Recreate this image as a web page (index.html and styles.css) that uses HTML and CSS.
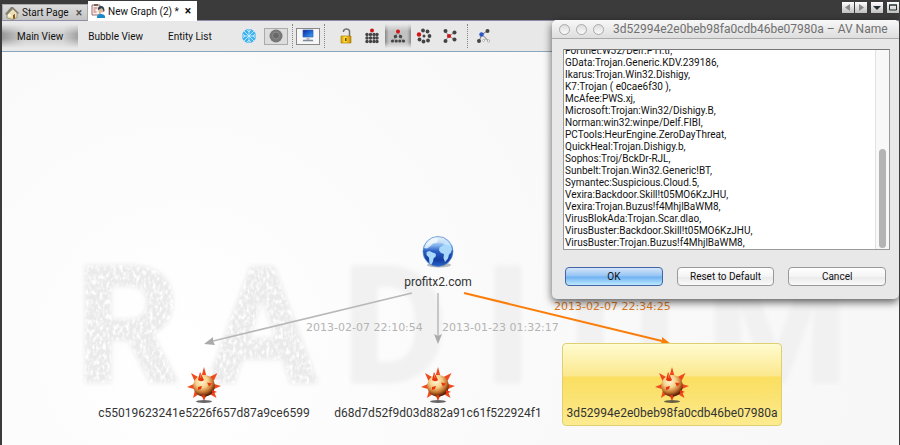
FILE: index.html
```html
<!DOCTYPE html>
<html lang="en">
<head>
<meta charset="utf-8">
<title>New Graph (2)</title>
<link rel="stylesheet" href="styles.css">
</head>
<body>
<svg class="defs" width="0" height="0" aria-hidden="true">
  <defs>
    <radialGradient id="ball" cx=".4" cy=".3" r=".72">
      <stop offset="0" stop-color="#fff8d4"/><stop offset=".4" stop-color="#f6d08a"/><stop offset=".7" stop-color="#c8742e"/><stop offset="1" stop-color="#401000"/>
    </radialGradient>
    <linearGradient id="sea" x2="0" y2="1">
      <stop offset="0" stop-color="#e2f2fd"/><stop offset=".3" stop-color="#82b2ea"/><stop offset=".48" stop-color="#2b5fc6"/><stop offset=".78" stop-color="#143da0"/><stop offset="1" stop-color="#2a66c6"/>
    </linearGradient>
    <linearGradient id="gold" x2="1"><stop stop-color="#d89b00"/><stop offset=".4" stop-color="#ffe33a"/><stop offset="1" stop-color="#c98800"/></linearGradient>
    <linearGradient id="screen" x2="1" y2="1"><stop stop-color="#06259e"/><stop offset="1" stop-color="#3aa3ff"/></linearGradient>
    <symbol id="mine" viewBox="0 0 36 38">
      <ellipse cx="18" cy="35.500" rx="8" ry="1.400" fill="#333" opacity=".75"/>
      <g fill="#f04a1c">
        <path d="M15.800 9 18 1l2.200 8zM23.500 11l8-4-4 8zM28 18l7 2-7 3zM27.500 24l3 8-7-4zM20.500 29l-2.500 6-2.500-6zM13 28l-6 4 2-8zM8 23l-7-2 7-3zM8.500 15 5 7l7 4z"/>
      </g>
      <circle cx="18" cy="19.800" r="10.800" fill="url(#ball)"/>
      <g fill="#e8330b">
        <path d="M12 14 14 6l4 8q-2 2.500-6 0zM21 16.500l5 1-3 3zM12 21l4-1-1 3-3 1z"/>
        <path d="M26 24l5 2-5 1.500zM19 29l-1 5-2-5z"/>
      </g>
      <path d="M14 8l1 4" stroke="#ff8a5c" stroke-width=".8"/>
    </symbol>
    <symbol id="globe" viewBox="0 0 34 34">
      <ellipse cx="18" cy="30" rx="12" ry="2.500" fill="#777" opacity=".5"/>
      <circle cx="17" cy="16.500" r="15" fill="url(#sea)" stroke="#4a80c8" stroke-width=".7"/>
      <path d="M3 13Q6 4 14 2.500l3 2-1 3-4 1-3 3-3 2z" fill="#eef8fe" opacity=".8"/>
      <path d="M5.500 17l3-1 3 1.500 3 1 .5 2.500-2.500 2.500-.5 3-1.500 3-2-1-.5-6-2.500-2.500z" fill="#a9d8fb"/>
      <path d="M18.500 12.500l4-2.500 0-3 3-2 3.500 3 2 6-1 3.500-2 2-1 4-3 3.500-1.500-4 .5-4-3-1-2-2.500z" fill="#a9d8fb"/>
      <path d="M4.500 11Q17 5 29.500 11 26 2.500 17 2.500T4.500 11z" fill="#fff" opacity=".35"/>
    </symbol>
    <filter id="soft" x="-10%" y="-10%" width="120%" height="120%"><feGaussianBlur stdDeviation="2"/></filter>
    <filter id="leather" x="-10%" y="-10%" width="120%" height="120%">
      <feTurbulence type="fractalNoise" baseFrequency=".3 .2" numOctaves="2" seed="4" result="n"/>
      <feColorMatrix in="n" values="0 0 0 0 1  0 0 0 0 1  0 0 0 0 1  3 0 0 0 -1.300" result="spots"/>
      <feComposite in="spots" in2="SourceAlpha" operator="in" result="inside"/>
      <feGaussianBlur in="SourceGraphic" stdDeviation="2" result="base"/>
      <feMerge><feMergeNode in="base"/><feMergeNode in="inside"/></feMerge>
    </filter>
  </defs>
</svg>

<header class="tabbar">
  <nav class="tabs" aria-label="Documents">
    <div class="tab">
      <svg width="14" height="14" viewBox="0 0 14 14"><path d="M2 7v5l6 1.500 4-2V7L7 2z" fill="#ece0b8" stroke="#8a7c54" stroke-width=".7"/><path d="M0 8 6 1l2 0 6 6-1 1-5-5-6 6z" fill="#85806f"/><path d="M8 13V9l2-1v4.500z" fill="#895d22"/><path d="M3 8.500h3v2H3z" fill="#fffbe6"/></svg>
      <a href="#start">Start Page</a><button class="close" aria-label="Close Start Page">×</button>
    </div>
    <div class="tab active">
      <svg width="14" height="14" viewBox="0 0 14 14"><path d="M1 1h8v10H1z" fill="#f7eeee" stroke="#9b6e69"/><path d="M3 0h4v2H3z" fill="#77645f"/><path d="M2.500 4h4M2.500 6h2M2.500 8h3" stroke="#bd6a64"/><path d="M6 14q-.5-4 4-4t4 4z" fill="#198bc7"/><circle cx="10" cy="6" r="2.800" fill="#dcb99c"/><path d="M7 6q-.5-4 3-4t3.500 5l-1 1q0-3-2-4-1 1-3.500 2z" fill="#32434d"/></svg>
      <a href="#graph">New Graph (2) *</a><button class="close" aria-label="Close New Graph">×</button>
    </div>
  </nav>
  <div class="window-tools">
    <button aria-label="Previous tab"><svg width="12" height="11"><path d="M8 2v7L3 5.500z" fill="#888"/></svg></button>
    <button aria-label="Next tab"><svg width="12" height="11"><path d="M4 2v7l5-3.500z" fill="#888"/></svg></button>
    <button class="apart" aria-label="List tabs"><svg width="12" height="11"><path d="M2 4h8L6 8z" fill="#223033"/></svg></button>
    <button class="apart" aria-label="Maximize"><svg width="12" height="11"><path d="M2.500 3h7v5h-7z" fill="none" stroke="#223033"/><path d="M2 2.500h8v1H2z" fill="#223033"/></svg></button>
  </div>
</header>

<div class="toolbar">
  <button class="view pressed">Main View</button>
  <button class="view">Bubble View</button>
  <button class="view">Entity List</button>
  <div class="tools">
    <button class="tool" aria-label="Freeze"><svg width="16" height="16" viewBox="0 0 16 16"><circle cx="8" cy="8" r="7" fill="#3eb1ef"/><path d="M8 1v14M1 8h14M3 3l10 10M13 3 3 13M6 2l2 2 2-2M6 14l2-2 2 2M2 6l2 2-2 2M14 6l-2 2 2 2" fill="none" stroke="#d3f2ff" stroke-width=".8"/></svg></button>
    <button class="tool boxed" aria-label="Record"><svg width="14" height="14" viewBox="0 0 14 14"><circle cx="7" cy="7" r="6.500" fill="#767676"/><circle cx="7" cy="6.500" r="3.500" fill="#686868" stroke="#8c8c8c"/></svg></button>
    <span class="sep"></span>
    <button class="tool boxed lit" aria-label="Display"><svg width="14" height="14" viewBox="0 0 14 14"><path d="M2 1h10v7H2z" fill="url(#screen)" stroke="#315cae" stroke-width=".7"/><path d="M5.500 8.500h3v2h3l1 2h-11l1-2h3z" fill="#b2b9c2"/><path d="M2 11.500h10" stroke="#747e8b" stroke-width=".8"/></svg></button>
    <span class="sep"></span>
    <button class="tool wide" aria-label="Unlock"><svg width="12" height="16" viewBox="0 0 12 16"><path d="M3.500 4V3q.5-2 3-2t3 2v6" fill="none" stroke="#6f6f6f" stroke-width="1.500"/><path d="M1 8h10v7H1z" fill="url(#gold)" stroke="#a77500" stroke-width=".6"/><path d="M5 10h1.500v3H5z" fill="#6d4c00"/></svg></button>
    <button class="tool grid-tool" aria-label="Hierarchy layout"><svg width="16" height="16" viewBox="0 0 16 16"><g fill="#444"><circle cx="3" cy="6.500" r="1.700"/><circle cx="6.500" cy="6.500" r="1.700"/><circle cx="10" cy="6.500" r="1.700"/><circle cx="13" cy="6.500" r="1.700"/><circle cx="3" cy="10" r="1.700"/><circle cx="6.500" cy="10" r="1.700"/><circle cx="10" cy="10" r="1.700"/><circle cx="13" cy="10" r="1.700"/><circle cx="3" cy="13.500" r="1.700"/><circle cx="6.500" cy="13.500" r="1.700"/><circle cx="10" cy="13.500" r="1.700"/><circle cx="13" cy="13.500" r="1.700"/></g><circle cx="8" cy="2.500" r="2" fill="#d31414"/></svg></button>
    <button class="tool grid-tool down" aria-label="Tree layout"><svg width="16" height="16" viewBox="0 0 16 16"><path d="M8 4 3 13M8 4l5 9" stroke="#888" stroke-width=".8"/><g fill="#444"><circle cx="5.500" cy="8.500" r="1.700"/><circle cx="10.500" cy="8.500" r="1.700"/><circle cx="2.500" cy="13" r="1.600"/><circle cx="6.200" cy="13" r="1.600"/><circle cx="9.800" cy="13" r="1.600"/><circle cx="13.500" cy="13" r="1.600"/></g><circle cx="8" cy="3.500" r="2" fill="#d31414"/></svg></button>
    <button class="tool grid-tool" aria-label="Circular layout"><svg width="16" height="16" viewBox="0 0 16 16"><g fill="#444"><circle cx="7" cy="2.500" r="1.900"/><circle cx="11.500" cy="3.500" r="1.900"/><circle cx="13.500" cy="8" r="1.900"/><circle cx="12" cy="12.500" r="1.900"/><circle cx="7.500" cy="13.500" r="1.900"/><circle cx="3.500" cy="11.500" r="1.900"/><circle cx="8" cy="8" r="1.500"/></g><circle cx="3" cy="6.500" r="2.200" fill="#d31414"/></svg></button>
    <button class="tool grid-tool" aria-label="Force layout"><svg width="16" height="16" viewBox="0 0 16 16"><path d="M3 3l4 5 6-4M7 8l6 4M7 8l-4 5" fill="none" stroke="#888"/><g fill="#444"><circle cx="3.500" cy="3" r="2"/><circle cx="12.500" cy="4.500" r="2"/><circle cx="12.500" cy="11.500" r="2"/><circle cx="3.500" cy="13" r="2"/></g><circle cx="7" cy="8" r="2.100" fill="#d31414"/></svg></button>
    <span class="sep"></span>
    <button class="tool grid-tool" aria-label="Route edges"><svg width="16" height="16" viewBox="0 0 16 16"><path d="M11 3 6 6.500 3 13M6 6.500l7 7" fill="none" stroke="#777"/><path d="M7 13l4-3" fill="none" stroke="#aaa"/><circle cx="7.500" cy="12.500" r="1" fill="#fff" stroke="#999" stroke-width=".6"/><circle cx="12.500" cy="13" r="1.200" fill="#fff" stroke="#888" stroke-width=".6"/><circle cx="11.500" cy="3" r="2" fill="#444"/><circle cx="3" cy="13" r="2" fill="#444"/><circle cx="5.500" cy="6.500" r="2.200" fill="#2a55cb"/></svg></button>
  </div>
</div>

<main class="canvas">
  <svg class="backdrop" width="897" height="393" viewBox="2 52 897 393" aria-hidden="true">
    <g class="mark">
      <g filter="url(#leather)"><text x="76" y="382">R</text><text x="208" y="382">A</text></g>
      <g class="faint" filter="url(#soft)"><text x="342" y="382">D</text><text x="484" y="382">I</text><text x="569" y="382">U</text><text x="706" y="382">M</text></g>
    </g>
    <g fill="none" stroke="#b8b8b8" stroke-width="1.500"><path d="M412 293 213 341M438 293v44"/></g>
    <path d="M204 344l9-7 0 4 2 4zM438 344l-4-10 4 2 4-2z" fill="#aaa"/>
    <path d="M464 293 662 341" fill="none" stroke="#fb7d0a" stroke-width="2"/>
    <path d="M671 344l-9-7v4l-2 4z" fill="#fb7d0a"/>
  </svg>
  <span class="stamp first">2013-02-07 22:10:54</span>
  <span class="stamp second">2013-01-23 01:32:17</span>
  <span class="stamp third">2013-02-07 22:34:25</span>
  <div class="node root"><svg width="34" height="34"><use href="#globe"/></svg><span>profitx2.com</span></div>
  <div class="node left"><svg width="36" height="38"><use href="#mine"/></svg><span>c55019623241e5226f657d87a9ce6599</span></div>
  <div class="node middle"><svg width="36" height="38"><use href="#mine"/></svg><span>d68d7d52f9d03d882a91c61f522924f1</span></div>
  <div class="node selected"><svg width="36" height="38"><use href="#mine"/></svg><span>3d52994e2e0beb98fa0cdb46be07980a</span></div>
</main>

<section class="dialog" role="dialog" aria-labelledby="dialog-title">
  <div class="titlebar">
    <button class="light" aria-label="Close"></button><button class="light" aria-label="Minimize"></button><button class="light" aria-label="Zoom"></button>
    <h1 id="dialog-title">3d52994e2e0beb98fa0cdb46be07980a – AV Name</h1>
  </div>
  <div class="dialog-body">
    <div class="field">
      <textarea id="names" aria-labelledby="dialog-title" spellcheck="false" wrap="off">Fortinet:W32/Delf.PTI.tr,
GData:Trojan.Generic.KDV.239186,
Ikarus:Trojan.Win32.Dishigy,
K7:Trojan ( e0cae6f30 ),
McAfee:PWS.xj,
Microsoft:Trojan:Win32/Dishigy.B,
Norman:win32:winpe/Delf.FIBI,
PCTools:HeurEngine.ZeroDayThreat,
QuickHeal:Trojan.Dishigy.b,
Sophos:Troj/BckDr-RJL,
Sunbelt:Trojan.Win32.Generic!BT,
Symantec:Suspicious.Cloud.5,
Vexira:Backdoor.Skill!t05MO6KzJHU,
Vexira:Trojan.Buzus!f4MhjlBaWM8,
VirusBlokAda:Trojan.Scar.dlao,
VirusBuster:Backdoor.Skill!t05MO6KzJHU,
VirusBuster:Trojan.Buzus!f4MhjlBaWM8,</textarea>
      <div class="track"><div class="thumb"></div></div>
    </div>
    <div class="actions">
      <button class="push primary">OK</button>
      <button class="push">Reset to Default</button>
      <button class="push">Cancel</button>
    </div>
  </div>
</section>
<script src="script.js"></script>
</body>
</html>
```
FILE: styles.css
```css
* { box-sizing: border-box; }

body {
  margin: 0;
  min-height: 100vh;
  display: flex;
  flex-direction: column;
  position: relative;
  overflow: hidden;
  border-left: 2px solid #3b3b3b;
  border-right: 1px solid #3b3b3b;
  background: #fafafa;
  color: #111;
  font-family: Roboto, "Noto Sans", sans-serif;
  font-size: 10px;
}

.defs { position: absolute; }
svg { display: block; flex: none; }
button { margin: 0; padding: 0; border: 0; background: none; font: inherit; color: inherit; }
a { color: inherit; text-decoration: none; }

.tabbar {
  height: 21px;
  display: flex;
  justify-content: space-between;
  align-items: flex-start;
  background: #3b3b3b;
  border-bottom: 1px solid #8d8da8;
}
.tabs { display: flex; align-items: flex-end; height: 21px; padding-top: 1px; }
.tab {
  height: 17px;
  width: 86px;
  display: flex;
  align-items: center;
  gap: 3px;
  padding: 0 5px 0 2px;
  background: linear-gradient(#dcdcdc, #c3c3c3);
  border: 1px solid #aaa;
  border-bottom-color: #8d8da8;
  white-space: nowrap;
}
.tab.active { height: 20px; width: 109px; background: #fff; border-color: #fff; }
.close { margin-left: auto; font-size: 12px; font-weight: bold; line-height: 12px; color: #555; }
.active .close { color: #111; }

.window-tools { display: flex; padding-top: 2px; }
.window-tools button {
  width: 12px;
  height: 11px;
  background: linear-gradient(#fff, #bfbfbf);
}
.window-tools button + button { margin-left: 1px; }
.window-tools button.apart { margin-left: 4px; }

.toolbar {
  height: 31px;
  display: flex;
  align-items: center;
  background: #e8e8e8;
  border-bottom: 1px solid #8aa5bd;
}
.view { height: 24px; padding: 0 15px; white-space: nowrap; }
.view + .view { margin-left: -5px; }
.pressed {
  background: linear-gradient(rgba(232,232,232,1), rgba(232,232,232,0) 40%, rgba(232,232,232,0) 60%, rgba(232,232,232,1)), linear-gradient(90deg, #989898, #cfcfcf 30%, #cfcfcf 80%, #a2a2a2);
}
.tools { display: flex; align-items: center; margin-left: 10px; }
.tool { width: 24px; height: 24px; display: flex; align-items: center; justify-content: center; }
.boxed { height: 17px; margin: 0 4px 0 3px; border: 1px solid #aaa; background: #ddd; }
.lit { border-color: #888; background: #f7f7f7; }
.sep { height: 24px; border-left: 1px dotted #888; }
.wide { width: 26px; margin-left: 8px; }
.grid-tool { width: 26px; }
.down {
  background: linear-gradient(#e8e8e8, rgba(232,232,232,0) 30%, rgba(232,232,232,0) 75%, #e8e8e8), linear-gradient(90deg, #888, #c2c2c2 15%, #c2c2c2 85%, #888);
}
.tools .grid-tool + .sep { margin: 0 3px 0 4px; }

.canvas {
  flex: 1;
  position: relative;
  overflow: hidden;
  background: radial-gradient(circle at 20% 75%, #fff, #fafafa 40%, #f7f7f7);
}
.backdrop { position: absolute; left: 0; top: 0; }
.mark text {
  font-family: Roboto, "Liberation Sans", sans-serif;
  font-weight: bold;
  font-size: 162px;
  fill: #eaeaea;
  stroke: #eaeaea;
  stroke-width: 3px;
}
.mark .faint text { fill: #f1f1f1; stroke: #f1f1f1; }

.stamp {
  position: absolute;
  font-family: "DejaVu Sans", sans-serif;
  font-size: 11px;
  line-height: 14px;
  color: #b4b4b4;
  white-space: nowrap;
}
.first { left: 304px; top: 269px; }
.second { left: 440px; top: 269px; }
.third { left: 552px; top: 248px; color: #e07a1c; }

.node {
  position: absolute;
  width: 220px;
  display: flex;
  flex-direction: column;
  align-items: center;
  gap: 1px;
  font-size: 12px;
  line-height: 16px;
  color: #333;
}
.root { left: 326px; top: 183px; gap: 5px; }
.left { left: 92px; top: 314px; }
.middle { left: 326px; top: 314px; }
.selected {
  left: 560px;
  top: 291px;
  height: 83px;
  padding-top: 22px;
  border: 1px solid #e0cf70;
  border-radius: 4px;
  background: linear-gradient(#fffbd0, #fbe88e 39%, #fadf60 41%, #fbe47a 75%, #fdeb90);
}

.dialog {
  position: absolute;
  right: 0;
  top: 20px;
  width: 347px;
  border-radius: 5px;
  background: #e8e8e8;
  box-shadow: 0 3px 9px rgba(0,0,0,.65);
}
.titlebar {
  height: 19px;
  display: flex;
  align-items: center;
  gap: 6px;
  padding-left: 7px;
  border-bottom: 1px solid #aaa;
  border-radius: 5px 5px 0 0;
  background: linear-gradient(#f8f8f8, #dedede);
}
.light { width: 11px; height: 11px; border: 1px solid #a9a9a9; border-radius: 50%; background: linear-gradient(#ddd, #fafafa); }
.titlebar h1 { margin: 0 0 0 3px; font-size: 12px; line-height: 16px; font-weight: normal; color: #707070; white-space: nowrap; }
.dialog-body { padding: 10px 9px 13px 11px; }
.field { display: flex; height: 201px; border: 1px solid #999; border-top-color: #777; background: #fff; }
textarea {
  flex: 1;
  min-width: 0;
  margin: 0;
  padding: 0 1px;
  border: 0;
  outline: 0;
  resize: none;
  overflow: hidden;
  background: #fff;
  color: #111;
  font-family: inherit;
  font-size: 10px;
  line-height: 12px;
}
.track { width: 14px; padding: 0 3px 1px; display: flex; align-items: flex-end; border-left: 1px solid #e2e2e2; background: #f8f8f8; }
.thumb { width: 7px; height: 50%; border-radius: 4px; background: #b4b4b4; }
.actions { display: grid; grid-template-columns: repeat(3, 1fr); gap: 14px; padding: 17px 4px 0 2px; }
.push {
  height: 19px;
  border: 1px solid #999;
  border-radius: 4px;
  background: linear-gradient(#fff, #f4f4f4 50%, #e9e9e9 51%, #fafafa);
}
.primary { border-color: #4464a8; background: linear-gradient(#d4e6fa, #93c3f4 48%, #6eb0f2 52%, #bdeaff); }
```
FILE: script.js
```js
const names = document.getElementById("names");
names.scrollTop = names.scrollHeight;
```
